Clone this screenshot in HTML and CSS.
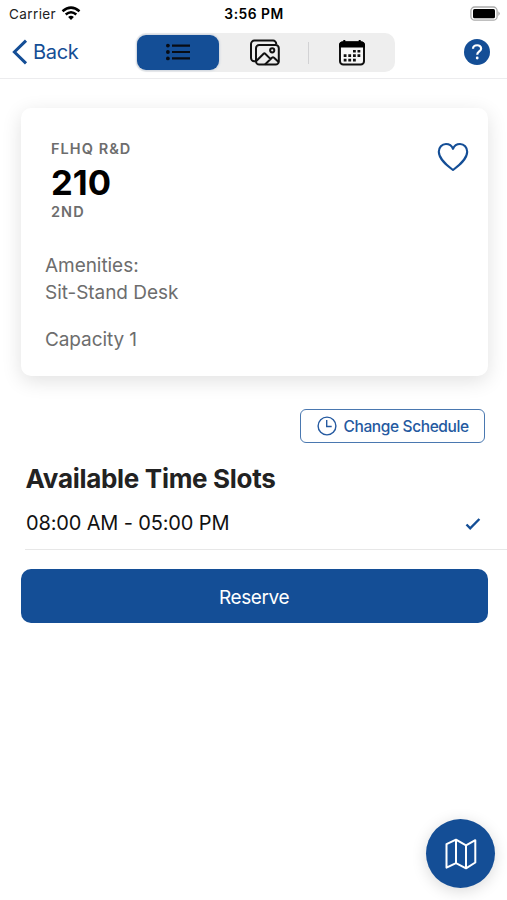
FILE: index.html
```html
<!DOCTYPE html>
<html lang="en">
<head>
<meta charset="utf-8">
<title>Space 210</title>
<link rel="stylesheet" href="styles.css">
</head>
<body>
<div class="status">
  <div class="carrier"><span>Carrier</span>
    <svg width="20" height="15" viewBox="0 0 20 15"><g fill="none" stroke="#000" stroke-width="2.5"><path d="M1.5 5.3Q10-2 18.5 5.3"/><path d="M4.7 8.5Q10 4 15.3 8.5"/></g><path d="M7.1 11Q10 8.6 12.9 11L10 14z"/></svg>
  </div>
  <div class="clock">3:56 PM</div>
  <svg class="battery" width="32" height="16" viewBox="0 0 32 16"><rect x="1.9" y="1" width="26.2" height="13.2" rx="3.8" fill="#fff" stroke="#aaa" stroke-width="1.3"/><rect x="4" y="3" width="22" height="9.2" rx="1.5"/><path d="M29.300 5.200q3 2.400 0 4.800z" fill="#aaa"/></svg>
</div>
<header class="nav">
  <a class="back"><svg width="16" height="26" viewBox="0 0 16 26"><path d="M14 1.6 2.4 13 14 24.4" fill="none" stroke="currentColor" stroke-width="3"/></svg><span>Back</span></a>
  <div class="segments">
    <div class="segment selected"><svg width="26" height="18" viewBox="0 0 26 18"><g fill="#080c14"><circle cx="2.9" cy="2.6" r="1.9"/><circle cx="2.9" cy="9" r="1.9"/><circle cx="2.9" cy="15.4" r="1.9"/></g><path d="M7 2.6h18M7 9h18M7 15.4h18" stroke="#080c14" stroke-width="2.1"/></svg></div>
    <div class="segment"><svg width="32" height="28" viewBox="0 0 32 28" fill="none" stroke="#111" stroke-width="2"><path d="M6 22.2H5.2A3.2 3.2 0 0 1 2 19V5a3.4 3.4 0 0 1 3.4-3.4H24A3.2 3.2 0 0 1 27.2 5"/><rect x="7" y="6" width="22.8" height="19.6" rx="3.2"/><circle cx="23.2" cy="11.3" r="2.1"/><path d="m7.3 22 7.3-7.3q.8-.8 1.6 0l5.2 5.2M16 25.4l7.2-6.8q.8-.8 1.6 0l4.8 4.3"/></svg></div>
    <i class="divider"></i>
    <div class="segment"><svg width="28" height="28" viewBox="0 0 28 28"><rect x="2" y="3.2" width="24" height="22.4" rx="3.3" fill="#f7f7f7" stroke="#111" stroke-width="2"/><path d="M1 8.6V6a3.6 3.6 0 0 1 3.6-3.6h18.8A3.6 3.6 0 0 1 27 6v2.6z"/><path d="M6.3 1v3M21.7 1v3" stroke="#000" stroke-width="2"/><g fill="#111"><path d="M15 11h2.8v2.6H15zM19.5 11h2.8v2.6h-2.8zM5.7 15.3h2.8v2.6H5.7zM10.3 15.3h2.8v2.6h-2.8zM15 15.3h2.8v2.6H15zM19.5 15.3h2.8v2.6h-2.8zM5.7 19.8h2.8v2.6H5.7zM10.3 19.8h2.8v2.6h-2.8zM15 19.8h2.8v2.6H15z"/></g></svg></div>
  </div>
  <div class="help"><svg width="26" height="26" viewBox="0 0 26 26"><circle cx="13" cy="13" r="13" fill="currentColor"/><path d="M9 9.7c.2-4.6 8.3-4.6 8.1 0-.1 2.8-3.9 2.8-3.9 6" fill="none" stroke="#fff" stroke-width="2.2"/><circle cx="13.2" cy="19" r="1.4" fill="#fff"/></svg></div>
</header>
<main>
  <section class="card">
    <div class="heading">
      <div><div class="eyebrow">FLHQ R&amp;D</div><h1>210</h1><div class="eyebrow floor">2ND</div></div>
      <svg width="32" height="30" viewBox="0 0 32 30"><path d="M16 28C10.5 23.8 1.800 17.500 1.800 9.800 1.800 5.400 4.900 2 9 2c3.300 0 5.800 1.900 7 4.800C17.200 3.900 19.700 2 23 2c4.100 0 7.200 3.400 7.200 7.800 0 7.700-8.700 14-14.200 18.200z" fill="none" stroke="currentColor" stroke-width="2.1" stroke-linejoin="round"/></svg>
    </div>
    <p class="amenities">Amenities:<br>Sit-Stand Desk</p>
    <p class="capacity">Capacity 1</p>
  </section>
  <button class="schedule"><svg width="20" height="20" viewBox="0 0 20 20" fill="none" stroke="currentColor" stroke-width="1.4"><circle cx="10" cy="10" r="8.9"/><path d="M9.7 4v6.5h5"/></svg><span>Change Schedule</span></button>
  <h2>Available Time Slots</h2>
  <div class="slot"><span>08:00 AM - 05:00 PM</span><svg width="16" height="14" viewBox="0 0 16 14"><path d="m1.5 7.5 3.7 3.8L14.4 2" fill="none" stroke="currentColor" stroke-width="2.4"/></svg></div>
  <button class="reserve">Reserve</button>
</main>
<button class="fab"><svg width="32" height="32" viewBox="0 0 32 32" fill="none" stroke="#fff" stroke-width="2" stroke-linejoin="round"><path d="M1.5 6.2 11 1.7l10 5.600 9.300-5.100v22.300L21 30.300l-10-5.200-9.500 4.500zM11 1.700v23.400M21 7.300v23"/></svg></button>
</body>
</html>
```

FILE: styles.css
```css
* { box-sizing: border-box; }
body {
  margin: 0;
  height: 900px;
  overflow: hidden;
  background: #fff;
  color: #000;
  font-family: Inter, "Liberation Sans", sans-serif;
}
svg { display: block; flex: none; }
h1, h2, p { margin: 0; }
button { font: inherit; margin: 0; padding: 0; border: 0; }
.status {
  height: 27px;
  display: grid;
  grid-template-columns: 1fr auto 1fr;
  align-items: center;
  padding: 0 6px 0 9px;
  font-size: 13.5px;
  line-height: 27px;
}
.carrier { display: flex; align-items: center; gap: 5px; letter-spacing: .4px; color: #222; }
.carrier span, .clock { padding-top: 1px; }
.carrier svg { margin-top: -1px; }
.clock { font-size: 13.8px; font-weight: 600; letter-spacing: .5px; margin-left: -2px; }
.battery { justify-self: end; }
.nav {
  height: 52px;
  display: flex;
  align-items: flex-start;
  border-bottom: 1px solid #ececee;
  color: #144e96;
}
.back {
  display: flex;
  align-items: center;
  width: 136px;
  height: 50px;
  padding-left: 12px;
  gap: 5px;
  font-size: 20px;
  letter-spacing: -.3px;
}
.segments {
  display: flex;
  align-items: center;
  width: 259px;
  height: 39px;
  margin-top: 6px;
  background: #eee;
  border-radius: 10px;
}
.segment { width: 86px; display: flex; justify-content: center; }
.segment.selected {
  width: 82px;
  height: 35px;
  margin: 0 3px 0 1px;
  align-items: center;
  background: #144e96;
  border-radius: 9px;
  box-shadow: 0 0 2px 1px #cfd6df;
}
.selected svg { margin-top: -1px; }
.divider { width: 1px; height: 22px; background: #d2d2d4; }
.help { margin: 12px 17.5px 0 auto; }
main { padding: 29px 19.5px 0 20.5px; color: #144e96; }
.card {
  height: 268px;
  padding: 31px 18px 0 24.5px;
  color: #6d6d6d;
  background: #fff;
  border-radius: 10px;
  box-shadow: 0 5px 20px rgba(0, 0, 0, .12);
}
.heading { display: flex; justify-content: space-between; padding-left: 6px; }
.heading svg { margin: 3px 1px 0 0; color: #144e96; }
.eyebrow { font-size: 14.5px; line-height: 20px; font-weight: 600; letter-spacing: 1.05px; }
h1 { font-size: 34.6px; line-height: 46px; font-weight: 700; color: #000; }
.floor { margin-top: -3px; }
.amenities { margin-top: 30px; line-height: 27px; font-size: 19px; letter-spacing: -.05px; }
.capacity { margin-top: 20px; line-height: 27px; font-size: 19px; letter-spacing: -.1px; }
.schedule {
  width: 185px;
  height: 34px;
  margin: 33px 3px 0 auto;
  display: flex;
  align-items: center;
  gap: 7px;
  padding-left: 16px;
  background: #fff;
  border: 1.5px solid #4a78b0;
  border-radius: 6px;
  color: #2459a0;
  font-size: 15.5px;
  font-weight: 500;
  letter-spacing: -.38px;
  white-space: nowrap;
}
h2 {
  margin: 20px 0 0 5px;
  font-size: 26px;
  line-height: 32px;
  font-weight: 700;
  letter-spacing: -.3px;
  color: #222;
}
.slot {
  display: flex;
  justify-content: space-between;
  align-items: center;
  height: 55px;
  margin: 0 -20px 0 4.5px;
  padding: 1px 27px 0 1px;
  border-bottom: 1px solid #e7e7e7;
  font-size: 20px;
  letter-spacing: -.15px;
}
.slot span { color: #111; }
.slot svg { margin-top: 2px; }
.reserve {
  display: block;
  width: 467px;
  height: 54px;
  margin-top: 19px;
  padding-top: 2px;
  background: #144e96;
  border-radius: 10px;
  color: #fff;
  font-size: 19px;
  letter-spacing: -.4px;
}
.fab {
  position: absolute;
  left: 426px;
  top: 819px;
  width: 69px;
  height: 69px;
  display: grid;
  place-items: center;
  border-radius: 50%;
  background: #144e96;
  box-shadow: 0 3px 15px rgba(0, 0, 0, .15);
}
```
